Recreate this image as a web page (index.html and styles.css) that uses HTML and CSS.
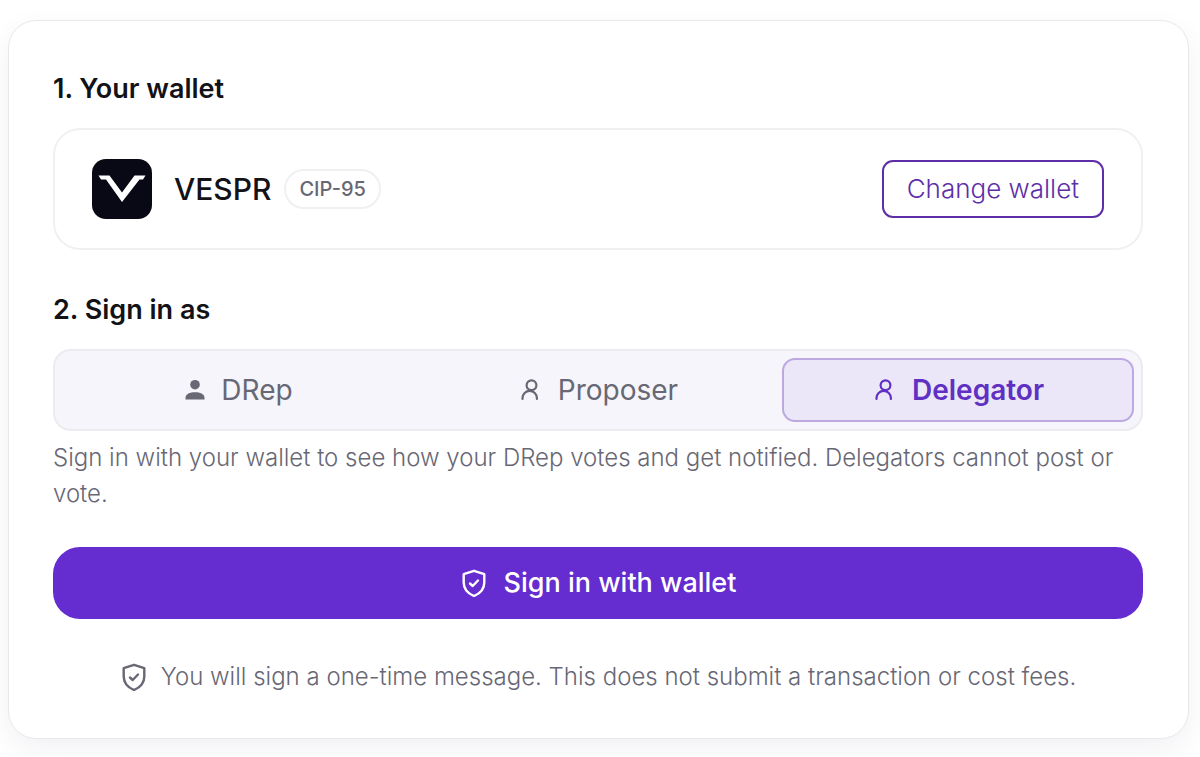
FILE: index.html
```html
<!DOCTYPE html>
<html lang="en">
<head>
<meta charset="utf-8">
<meta name="viewport" content="width=device-width, initial-scale=1">
<title>Sign in with wallet</title>
<link rel="stylesheet" href="styles.css">
</head>
<body>
<main class="card">
  <section class="section">
    <h2 class="title">1. Your wallet</h2>
    <div class="wallet">
      <svg class="logo" viewBox="0 0 60 60" aria-hidden="true">
        <rect width="60" height="60" rx="14" fill="#080914"/>
        <path d="M6.500 16.500H17.500L30 33.500L42.500 16.500H53.500L51 20.500H47.500L30 43L14 20.500H9Z" fill="#fff"/>
      </svg>
      <span class="wallet-name">VESPR</span>
      <span class="badge">CIP-95</span>
      <button class="change" type="button">Change wallet</button>
    </div>
  </section>

  <section class="section">
    <h2 class="title" id="role-title">2. Sign in as</h2>
    <div class="roles" role="group" aria-labelledby="role-title">
      <button class="role" type="button" aria-pressed="false">
        <svg class="icon-role" viewBox="0 0 24 24" fill="currentColor" aria-hidden="true"><circle cx="12" cy="6.700" r="4.800"/><path d="M2.500 21.500V20C2.500 16 7 14.300 12 14.300S21.500 16 21.500 20V21.500Z"/></svg>
        <span>DRep</span>
      </button>
      <button class="role role-wide" type="button" aria-pressed="false">
        <svg class="icon-role" viewBox="0 0 24 24" fill="none" stroke="currentColor" stroke-width="2.200" stroke-linecap="round" aria-hidden="true"><circle cx="13.500" cy="7.200" r="4.900"/><path d="M4.500 21V20A7.200 7.200 0 0 1 18.900 20V21"/></svg>
        <span>Proposer</span>
      </button>
      <button class="role role-wide role-active" type="button" aria-pressed="true">
        <svg class="icon-role" viewBox="0 0 24 24" fill="none" stroke="currentColor" stroke-width="2.200" stroke-linecap="round" aria-hidden="true"><circle cx="13.500" cy="7.200" r="4.900"/><path d="M4.500 21V20A7.200 7.200 0 0 1 18.900 20V21"/></svg>
        <span>Delegator</span>
      </button>
    </div>
    <p class="help">Sign in with your wallet to see how your DRep votes and get notified. Delegators cannot post or vote.</p>
  </section>

  <button class="submit" type="button">
    <svg class="icon-shield" viewBox="0 0 28 28" fill="none" stroke="currentColor" stroke-width="2.400" stroke-linejoin="round" stroke-linecap="round" aria-hidden="true"><path d="M14 1.800L24.300 5.200V13.500C24.300 19.500 20 24.500 14 27C8 24.500 3.700 19.500 3.700 13.500V5.200Z"/><path d="M10 14.500L12.700 17L18 11.500"/></svg>
    <span>Sign in with wallet</span>
  </button>

  <p class="note">
    <svg class="icon-shield" viewBox="0 0 28 28" fill="none" stroke="currentColor" stroke-width="2.400" stroke-linejoin="round" stroke-linecap="round" aria-hidden="true"><path d="M14 1.800L24.300 5.200V13.500C24.300 19.500 20 24.500 14 27C8 24.500 3.700 19.500 3.700 13.500V5.200Z"/><path d="M10 14.500L12.700 17L18 11.500"/></svg>
    <span>You will sign a one-time message. This does not submit a transaction or cost fees.</span>
  </p>
</main>
</body>
</html>
```
FILE: styles.css
```css
* { box-sizing: border-box; }

body {
  margin: 0;
  padding: 20px 11px 17px 8px;
  background: #fff;
  color: #121217;
  font-family: Inter, "Liberation Sans", sans-serif;
}

button { font: inherit; cursor: pointer; }

.card {
  padding: 48px 45px 43px 44px;
  border: 1px solid #e8e8ec;
  border-radius: 28px;
  background: #fff;
  box-shadow: 0 10px 30px rgba(24, 20, 60, 0.06);
}

.section { margin-bottom: 40px; }
.section + .section { margin-bottom: 35px; }

.title {
  margin: 0 0 19px;
  font-size: 27px;
  line-height: 40px;
  font-weight: 600;
}

.wallet {
  display: flex;
  align-items: center;
  padding: 29px 37px;
  border: 2px solid #f0f0f2;
  border-radius: 27px;
}

.logo { width: 60px; height: 60px; }

.wallet-name {
  margin-left: 22px;
  font-size: 30px;
  line-height: 40px;
  font-weight: 500;
}

.badge {
  margin-left: 13px;
  padding: 0 13px;
  border: 2px solid #f0f0f2;
  border-radius: 20px;
  color: #686774;
  font-size: 20px;
  line-height: 36px;
  font-weight: 500;
}

.change {
  margin-left: auto;
  padding: 8px 23px;
  border: 2px solid #5e2ea8;
  border-radius: 11px;
  background: #fff;
  color: #5e2ea8;
  font-size: 26px;
  line-height: 38px;
  font-weight: 300;
}

.roles {
  display: grid;
  grid-template-columns: repeat(3, 1fr);
  gap: 8px;
  padding: 7px;
  border: 2px solid #ececf0;
  border-radius: 18px;
  background: #f6f5fb;
}

.role {
  display: flex;
  align-items: center;
  justify-content: center;
  gap: 14px;
  padding: 12px;
  border: 2px solid transparent;
  border-radius: 13px;
  background: transparent;
  color: #686774;
  font-size: 28px;
  line-height: 36px;
}

.role-wide { gap: 16px; }

.role-active {
  border-color: #bba9df;
  background: #ebe6f8;
  color: #6030c2;
  font-weight: 600;
}

.icon-role { width: 24px; height: 24px; }

.help {
  margin: 9px 0 0;
  color: #686774;
  font-size: 24px;
  line-height: 36px;
  font-weight: 300;
}

.submit {
  display: flex;
  align-items: center;
  justify-content: center;
  gap: 16px;
  width: 100%;
  padding: 18px;
  border: 0;
  border-radius: 27px;
  background: #652ccf;
  color: #fff;
  font-size: 27px;
  line-height: 36px;
  font-weight: 500;
}

.icon-shield { flex: none; width: 28px; height: 28px; }

.note {
  display: flex;
  align-items: center;
  justify-content: center;
  gap: 13px;
  margin: 40px 0 0;
  color: #686774;
  font-size: 24px;
  line-height: 36px;
  font-weight: 300;
}
```
